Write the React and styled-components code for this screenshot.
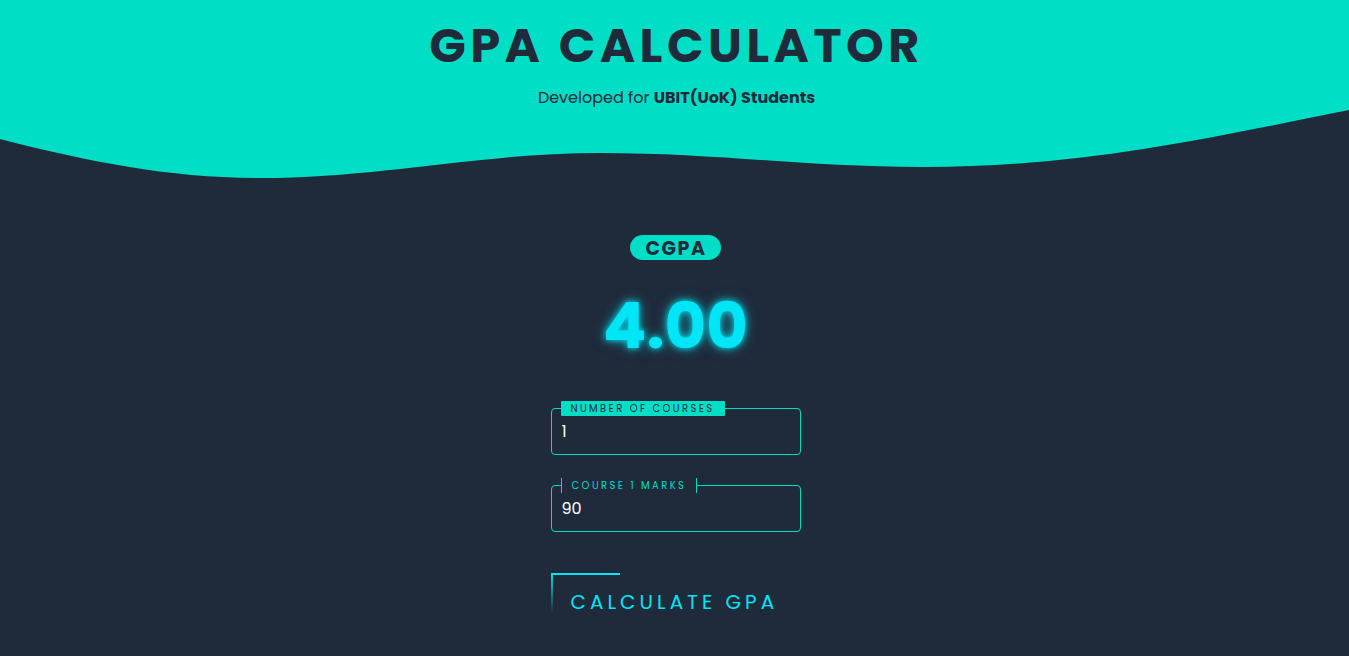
import React, { useState } from 'react';
import styled, { createGlobalStyle } from 'styled-components';

const teal = '#00dfc6';
const dark = '#1f2a3b';
const cyan = '#00e6f6';

const GlobalStyle = createGlobalStyle`
  body {
    margin: 0;
    background: ${dark};
    font-family: Poppins, Inter, "Noto Sans", sans-serif;
  }
`;

const Page = styled.div`
  min-height: 656px;
  overflow: hidden;
`;

const Header = styled.header`
  background: ${teal};
  height: 110px;
  text-align: center;
  padding-top: 14px;
  padding-left: 4px;
  box-sizing: border-box;
`;

const Title = styled.h1`
  margin: 0;
  font-size: 48px;
  line-height: 64px;
  font-weight: 700;
  letter-spacing: 4.4px;
  color: ${dark};
`;

const Subtitle = styled.p`
  margin: 9px 0 0;
  font-size: 16px;
  line-height: 22px;
  color: ${dark};
  b {
    font-weight: 700;
  }
`;

const Wave = styled.svg`
  display: block;
  width: 100%;
  height: 70px;
`;

const Main = styled.main`
  display: flex;
  flex-direction: column;
  align-items: center;
  padding: 55px 0 0 2px;
`;

const Pill = styled.div`
  background: ${teal};
  color: ${dark};
  font-weight: 700;
  font-size: 19px;
  letter-spacing: 1.6px;
  height: 25px;
  line-height: 27px;
  padding: 0 14px 0 15px;
  border-radius: 13px;
`;

const Score = styled.div`
  margin-top: 27px;
  font-size: 64px;
  line-height: 77px;
  font-weight: 700;
  color: ${cyan};
  text-shadow: 0 0 6px ${cyan}, 0 0 14px rgba(0, 230, 246, 0.5);
`;

const Field = styled.div`
  position: relative;
  width: 250px;
  margin-top: ${p => p.$top}px;
`;

const Input = styled.input`
  width: 100%;
  height: 47px;
  box-sizing: border-box;
  background: transparent;
  border: 1px solid ${teal};
  border-radius: 4px;
  color: #fff;
  font-family: inherit;
  font-size: 16px;
  padding: 0 10px;
  &:focus {
    outline: 0;
  }
`;

const Label = styled.span`
  position: absolute;
  left: 10px;
  top: -7px;
  height: 15px;
  line-height: 15px;
  padding: 0 10px;
  font-size: 10px;
  letter-spacing: 2.4px;
  background: ${p => (p.$active ? teal : dark)};
  color: ${p => (p.$active ? dark : teal)};
  border-left: ${p => (p.$active ? 'none' : `1px solid ${teal}`)};
  border-right: ${p => (p.$active ? 'none' : `1px solid ${teal}`)};
  border-radius: ${p => (p.$active ? '1px' : '0')};
`;

const Button = styled.button`
  position: relative;
  margin-top: 41px;
  align-self: center;
  width: 250px;
  height: 48px;
  padding: 10px 0 0 20px;
  text-align: left;
  background: transparent;
  border: 0;
  color: ${cyan};
  font-family: inherit;
  font-size: 20px;
  letter-spacing: 4px;
  cursor: pointer;
  &::before {
    content: '';
    position: absolute;
    left: 0;
    top: 0;
    width: 69px;
    height: 2px;
    background: ${cyan};
  }
  &::after {
    content: '';
    position: absolute;
    left: 0;
    top: 0;
    width: 2px;
    height: 40px;
    background: linear-gradient(${cyan}, transparent);
  }
`;

export default function App() {
  const [count, setCount] = useState('1');
  const [marks, setMarks] = useState('90');

  return (
    <Page>
      <GlobalStyle />
      <Header>
        <Title>GPA CALCULATOR</Title>
        <Subtitle>
          Developed for <b>UBIT(UoK) Students</b>
        </Subtitle>
      </Header>
      <Wave viewBox="0 0 1349 70" preserveAspectRatio="none">
        <path
          fill={teal}
          d="M0,0 L0,29 C90,52 170,68 260,68 C380,68 480,43 600,43 C720,43 800,57 923,57 C1080,57 1200,30 1349,0 Z"
        />
      </Wave>
      <Main>
        <Pill>CGPA</Pill>
        <Score>4.00</Score>
        <Field $top={44}>
          <Label $active>NUMBER OF COURSES</Label>
          <Input value={count} onChange={e => setCount(e.target.value)} />
        </Field>
        <Field $top={30}>
          <Label>COURSE 1 MARKS</Label>
          <Input value={marks} onChange={e => setMarks(e.target.value)} />
        </Field>
        <Button>CALCULATE GPA</Button>
      </Main>
    </Page>
  );
}
